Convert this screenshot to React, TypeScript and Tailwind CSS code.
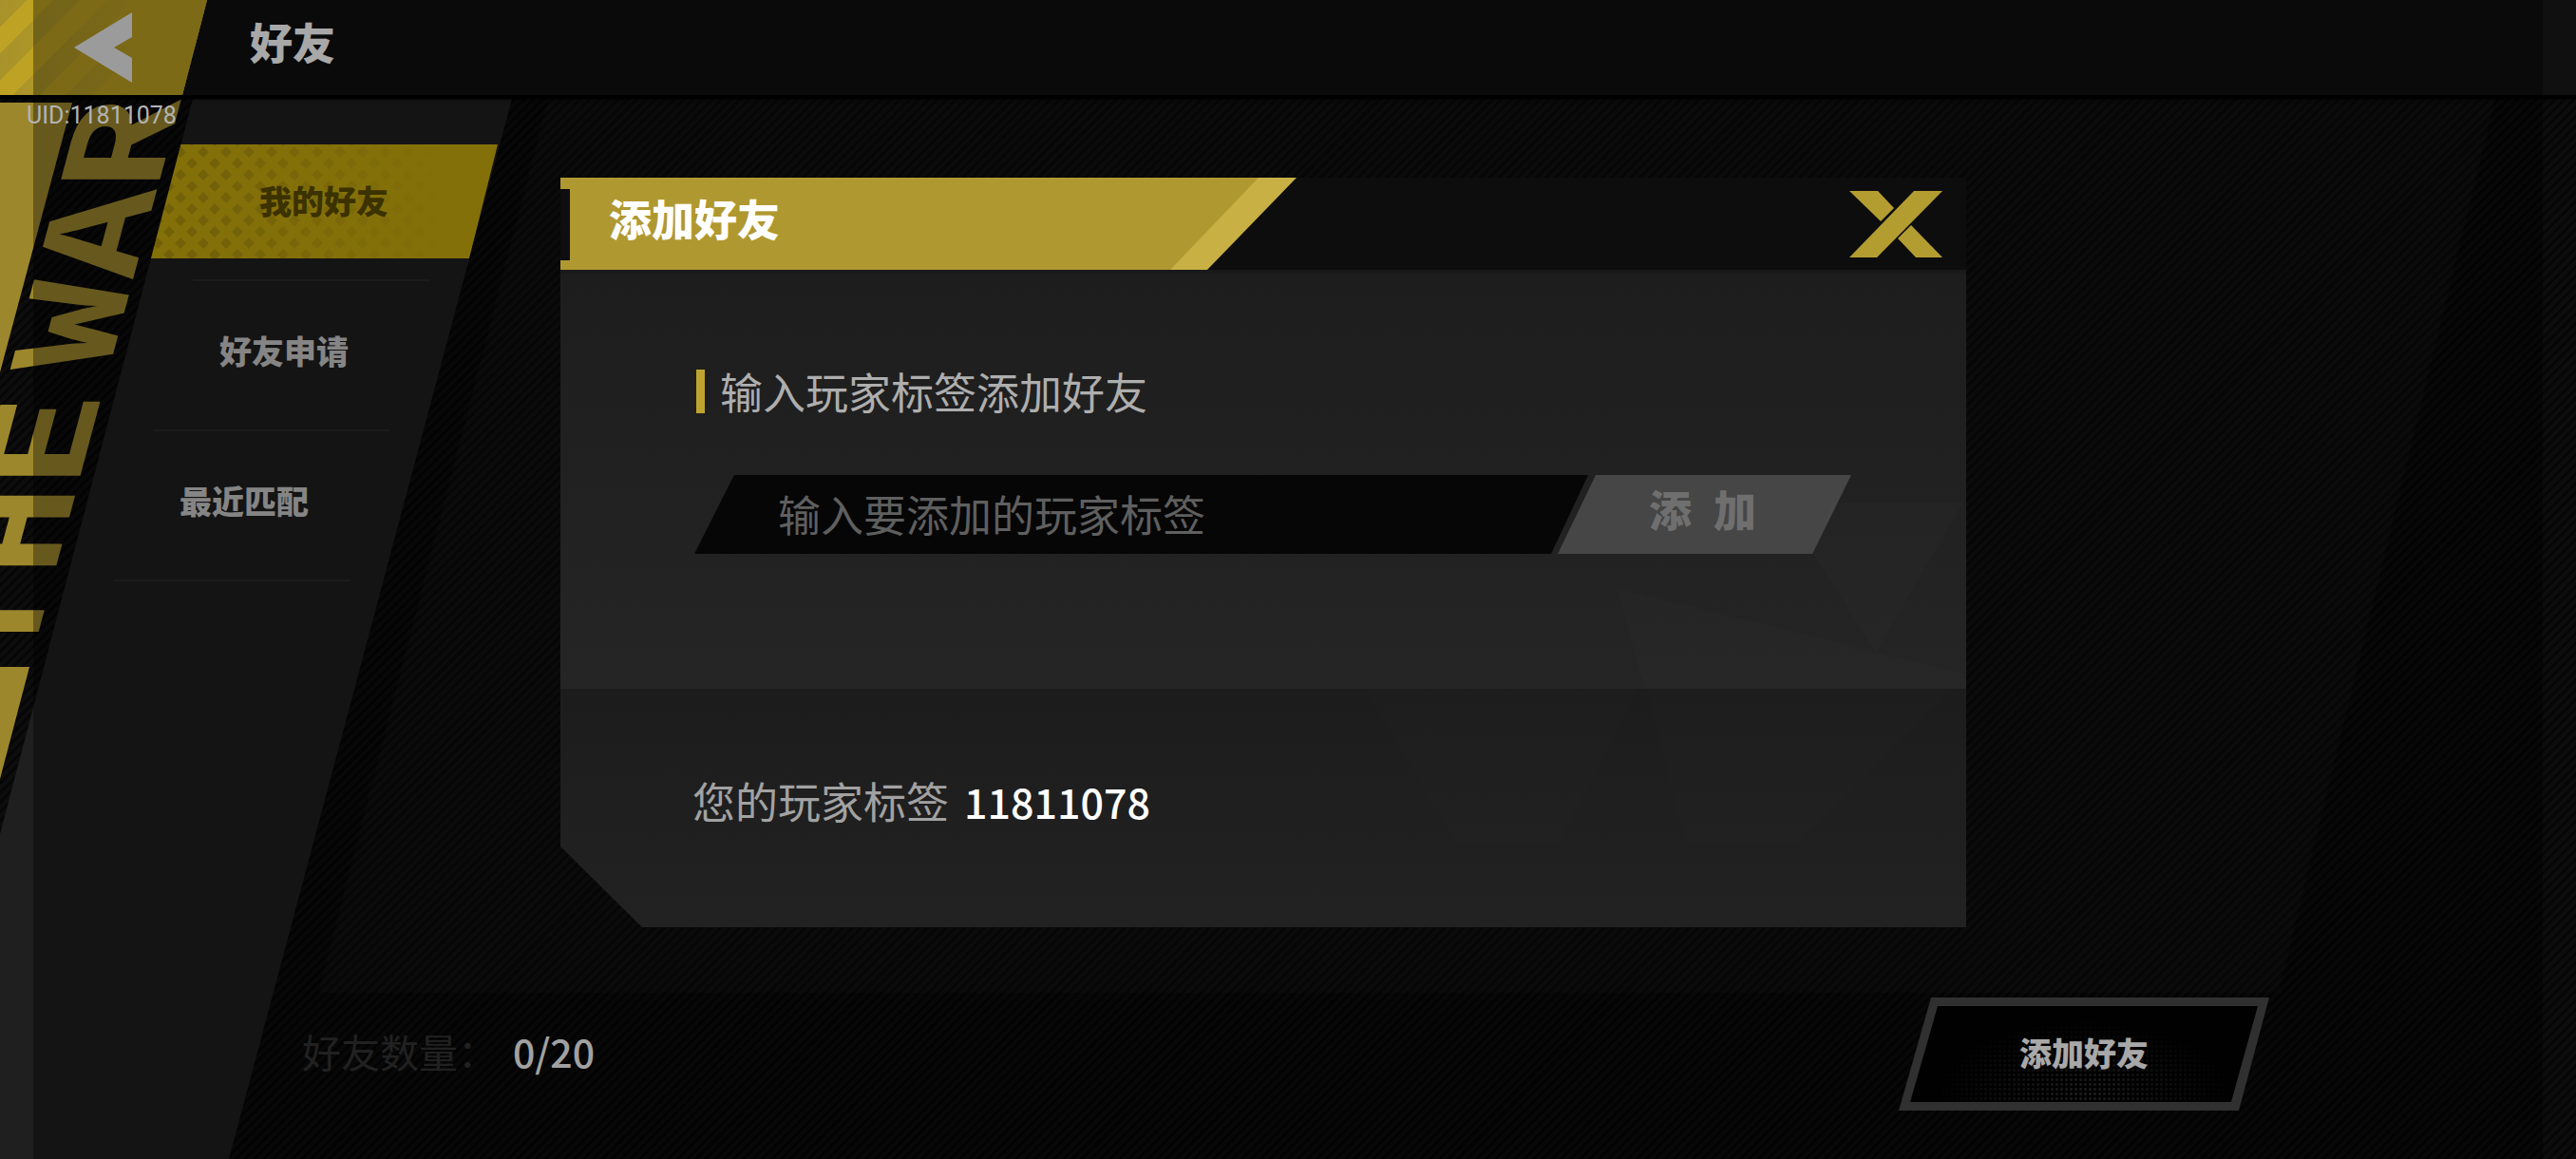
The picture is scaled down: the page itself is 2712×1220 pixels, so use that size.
import React from 'react';
import clsx from 'clsx';

const TABS = [
  { id: 'mine', label: '我的好友', offset: 'ml-[158px]' },
  { id: 'requests', label: '好友申请', offset: 'ml-[116px]' },
  { id: 'recent', label: '最近匹配', offset: 'ml-[74px]' },
];

const PLAYER_TAG = '11811078';

const BackIcon: React.FC = () => (
  <svg viewBox="0 0 62 74" className="w-[62px] h-[74px]" fill="currentColor" aria-hidden="true">
    <path d="M0 37 61 0V26L42 37 61 48V74Z" />
  </svg>
);

const CloseIcon: React.FC = () => (
  <svg viewBox="0 0 98 70" className="w-[98px] h-[70px]" fill="currentColor" aria-hidden="true">
    <path d="M68 0H98L29 70H0Z" />
    <path d="M0 0H30L47 18 33 32Z" />
    <path d="M65 36 98 70H70L51 50Z" />
  </svg>
);

// 选中标签上的菱形网点
const DiamondPattern: React.FC = () => (
  <svg
    className="absolute inset-0 w-full h-full [mask-image:linear-gradient(to_right,black_20%,transparent_85%)]"
    aria-hidden="true"
  >
    <defs>
      <pattern id="diamonds" width="24" height="24" patternUnits="userSpaceOnUse">
        <path d="M8 2 14 8 8 14 2 8ZM20 14 26 20 20 26 14 20ZM-4 14 2 20-4 26ZM20-10 26-4 20 2 14-4Z" fill="#000" fillOpacity="0.13" />
      </pattern>
    </defs>
    <rect width="100%" height="100%" fill="url(#diamonds)" />
  </svg>
);

// 左侧装饰：竖排 THE WAR
const SideBanner: React.FC = () => (
  <div className="absolute inset-0 overflow-hidden text-[#9d872c] pointer-events-none" aria-hidden="true">
    <div className="absolute left-0 top-1 w-[76px] h-[284px] bg-[#9d872c] [clip-path:polygon(0_0,100%_0,0_100%)]" />
    <div className="absolute left-[70px] top-0 h-[560px] -skew-x-[15deg] origin-top-left">
      <div className="flex gap-[28px] rotate-180 [writing-mode:vertical-rl] font-['Liberation_Mono',monospace] font-bold text-[158px] leading-[158px]">
        <span>THE</span>
        <span>WAR</span>
      </div>
    </div>
    <div className="absolute left-0 top-[598px] w-[31px] h-[118px] bg-[#9d872c] [clip-path:polygon(0_0,100%_0,0_100%)]" />
  </div>
);

const Sidebar: React.FC<{ active: string; onChange: (id: string) => void }> = ({ active, onChange }) => (
  <nav className="relative w-[540px] shrink-0 bg-[#1f1f1f] pt-12 [clip-path:polygon(203px_0,539px_0,241px_100%,0_100%,0_774px)]">
    <ul>
      {TABS.map((tab) => (
        <li key={tab.id} className={tab.offset}>
          <button
            onClick={() => onChange(tab.id)}
            className={clsx(
              'relative block w-[366px] h-[120px] pb-[2px] text-[34px] leading-[48px] font-black [clip-path:polygon(30px_0,100%_0,336px_100%,0_100%)]',
              active === tab.id ? 'bg-[#c8ab0f] text-[#5a4c00]' : 'text-[#cacaca]'
            )}
          >
            {active === tab.id && <DiamondPattern />}
            <span className="relative">{tab.label}</span>
          </button>
          <div className="mt-[22px] mb-[14px] ml-[45px] h-[2px] w-[249px] bg-[#2b2b2b]" />
        </li>
      ))}
    </ul>
  </nav>
);

const AddFriendDialog: React.FC<{ onClose: () => void }> = ({ onClose }) => {
  const [value, setValue] = React.useState('');

  return (
    <div className="absolute inset-0 flex items-start justify-center pt-[187px] pr-[52px]">
      <section role="dialog" aria-labelledby="dialog-title" className="w-full max-w-[1480px]">
        <header className="flex items-center justify-between h-[97px] pr-[25px] bg-[#0d0d0d]">
          <div className="relative flex items-center w-[775px] h-full pl-[51px] bg-[#c8b045] [clip-path:polygon(0_0,100%_0,681px_100%,0_100%)]">
            <div className="absolute inset-0 bg-[#b09830] [clip-path:polygon(0_0,735px_0,642px_100%,0_100%)]" />
            <div className="absolute left-0 top-3 w-[10px] h-[75px] bg-[#0d0d12]" />
            <h2 id="dialog-title" className="relative mb-3 text-[45px] leading-[48px] font-black text-white">
              添加好友
            </h2>
          </div>
          <button aria-label="关闭" onClick={onClose} className="text-[#b39d31]">
            <CloseIcon />
          </button>
        </header>

        <div className="relative text-[45px] leading-[48px] [clip-path:polygon(0_0,100%_0,100%_100%,86px_100%,0_607px)]">
          <div className="h-[441px] pt-[100px] pl-[143px] border-t-4 border-[#191919] bg-linear-to-b from-[#1d1d1d] to-[#252525]">
            <label htmlFor="player-tag" className="flex items-center gap-[16px] text-[#aeaeae]">
              <span className="w-[9px] h-[46px] bg-[#bea42e]" />
              输入玩家标签添加好友
            </label>
            <form className="relative flex mt-[64px] -ml-[2px]" onSubmit={(e) => e.preventDefault()}>
              <input
                id="player-tag"
                value={value}
                onChange={(e) => setValue(e.target.value)}
                placeholder="输入要添加的玩家标签"
                className="w-[941px] h-[83px] pl-[88px] pb-[2px] bg-[#060606] text-[#aeaeae] placeholder:text-[#5f5f5f] outline-none [clip-path:polygon(42px_0,100%_0,902px_100%,0_100%)]"
              />
              <button className="flex items-center justify-center gap-[23px] w-[309px] h-[83px] -ml-[32px] pb-3 pr-1 bg-[#464646] text-[#6f6f6f] font-black [clip-path:polygon(40px_0,100%_0,268px_100%,0_100%)]">
                <span>添</span>
                <span>加</span>
              </button>
            </form>
          </div>
          <div className="h-[251px] pt-[94px] pl-[139px] bg-linear-to-b from-[#1c1c1c] to-[#222222]">
            <p className="flex gap-[16px] text-[#a2a2a2]">
              您的玩家标签 <strong className="text-[43px] font-medium text-white">{PLAYER_TAG}</strong>
            </p>
          </div>
          {/* 背景碎片 */}
          <svg
            viewBox="0 0 660 446"
            className="absolute right-0 top-[245px] w-[660px] h-[446px] pointer-events-none"
            fill="#fff"
            aria-hidden="true"
          >
            <g fillOpacity="0.012">
              <path d="M520 0H657L565 158 498 53Z" />
              <path d="M292 90 660 181V195H321Z" />
            </g>
            <g fillOpacity="0.007">
              <path d="M27 196H315L231 358H123Z" />
              <path d="M323 196H645L483 358H365Z" />
            </g>
          </svg>
        </div>
      </section>
    </div>
  );
};

export default function App() {
  const [tab, setTab] = React.useState('mine');
  const [open, setOpen] = React.useState(true);

  return (
    <div className="relative flex flex-col min-h-screen overflow-hidden bg-black font-['Noto_Sans_CJK_SC',sans-serif]">
      <header className="relative z-10 flex items-center h-[100px] bg-[#101010] text-white shadow-[0_4px_4px_#000]">
        <button
          aria-label="返回"
          onClick={() => setOpen(false)}
          className="w-[218px] h-full pl-[78px] bg-[#bda223] bg-[linear-gradient(to_right,transparent,#bda223_150px),repeating-linear-gradient(135deg,#a8922a_0_20px,transparent_20px_40px)] text-[#ebebeb] [clip-path:polygon(0_0,100%_0,192px_100%,0_100%)]"
        >
          <BackIcon />
        </button>
        <h1 className="ml-[45px] mb-3 text-[45px] leading-[48px] font-black">好友</h1>
      </header>

      <main className="relative flex flex-1 mt-1 bg-[repeating-linear-gradient(135deg,#0d0d0d_0_4px,#060606_4px_7px)]">
        <SideBanner />
        <Sidebar active={tab} onChange={setTab} />
        <div className="flex flex-col flex-1 -ml-[205px]">
          <div className="flex-1 mr-[85px] bg-white/2 [clip-path:polygon(242px_0,100%_0,2064px_100%,0_100%)]" />
          <footer className="flex items-center justify-between h-[175px] pr-[323px] pb-[46px] -ml-[17px]">
            <p className="flex gap-[17px] pb-2 text-[41px] leading-[48px] text-[#333333]">
              好友数量： <span className="font-medium text-[#f5f5f5]">0/20</span>
            </p>
            <button
              onClick={() => setOpen(true)}
              className="w-[390px] h-[119px] p-[9px] bg-[#4a4a4a] text-[34px] leading-[48px] font-black text-white [clip-path:polygon(34px_0,100%_0,358px_100%,0_100%)]"
            >
              <span className="relative flex items-center justify-center h-full pb-1 bg-[#030303] [clip-path:polygon(32px_0,369px_0,341px_100%,3px_100%)]">
                <span className="absolute inset-0 bg-[radial-gradient(#2c2c2c_1px,transparent_2px)] bg-[length:5px_5px] [mask-image:radial-gradient(ellipse_at_50%_90%,black,transparent_60%)]" />
                <span className="relative">添加好友</span>
              </span>
            </button>
          </footer>
        </div>
      </main>

      {/* 安全区内的遮罩 */}
      <div className="absolute inset-y-0 left-[35px] right-[35px] z-20 bg-black/34 pointer-events-none" />
      <p className="absolute left-[28px] top-[108px] z-20 font-['Roboto',sans-serif] text-[25px] leading-[28px] text-[#b4b4b4]">
        UID:{PLAYER_TAG}
      </p>
      {open && (
        <div className="absolute inset-0 z-30">
          <AddFriendDialog onClose={() => setOpen(false)} />
        </div>
      )}
    </div>
  );
}
